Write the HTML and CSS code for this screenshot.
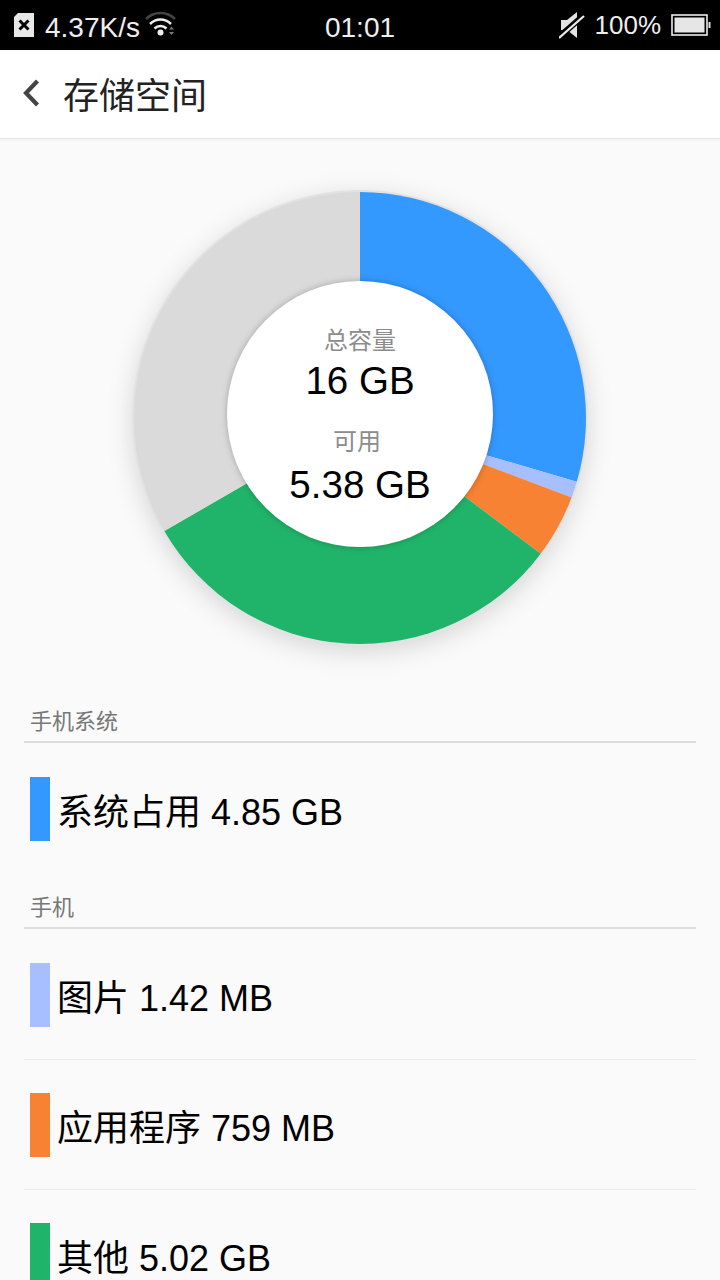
FILE: index.html
```
<!DOCTYPE html>
<html lang="zh">
<head>
<meta charset="utf-8">
<title>存储空间</title>
<link rel="stylesheet" href="styles.css">
</head>
<body>
<div class="page">
  <header class="status">
    <div class="status-left">
      <svg class="ic-sim" width="22" height="26" viewBox="0 0 22 26"><path d="M5 1H21V25H1V5Z" fill="#e8e8e8"/><path d="M6.500 8.500L15.500 17.500M15.500 8.500L6.500 17.500" stroke="#000" stroke-width="3" fill="none"/></svg>
      <span class="speed">4.37K/s</span>
      <svg class="ic-wifi" width="32" height="28" viewBox="0 0 32 28"><path d="M1 8C9 0 22 0 30 8" stroke="#444" stroke-width="2.500" fill="none"/><path d="M5 13C11 7 20 7 26 13" stroke="#eee" stroke-width="2.500" fill="none"/><path d="M9.500 17.500C13 14 18 14 21.500 17.500" stroke="#eee" stroke-width="2.500" fill="none"/><circle cx="15.500" cy="21.500" r="3" fill="#eee"/><path d="M24 18.500h5l-2.500-3zM24 21h5l-2.500 3z" fill="#777"/></svg>
    </div>
    <div class="clock">01:01</div>
    <div class="status-right">
      <svg class="ic-mute" width="26" height="28" viewBox="0 0 26 28"><path d="M2 9H8L18 1V27L8 19H2Z" fill="#e4e4e4"/><path d="M-1 27L24 5" stroke="#000" stroke-width="6"/><path d="M0 27L25 5" stroke="#eee" stroke-width="2.200"/></svg>
      <span class="batt-text">100%</span>
      <svg class="ic-batt" width="40" height="22" viewBox="0 0 40 22"><rect x="1" y="1" width="35" height="20" fill="none" stroke="#eee" stroke-width="1.600"/><rect x="3.500" y="3.500" width="30" height="15" fill="#e6e6e6"/><rect x="37.500" y="8" width="2" height="6" fill="#ddd"/></svg>
    </div>
  </header>
  <nav class="titlebar">
    <svg class="ic-back" width="18" height="30" viewBox="0 0 18 30"><path d="M15.500 3L4 15L15.500 27" stroke="#444" stroke-width="4.200" fill="none"/></svg>
    <h1 class="title">存储空间</h1>
  </nav>
  <main class="content">
    <section class="chart-wrap">
      <div class="chart">
        <svg class="donut" width="480" height="480" viewBox="-240 -240 480 480">
          <circle class="ring" r="228"/>
          <path fill="#3399ff" d="M0 0V-226A226 226 0 0 1 216.800 63.800Z"/>
          <path fill="#a8bfff" d="M0 0L216.800 63.800A226 226 0 0 1 211.600 79.500Z"/>
          <path fill="#f78233" d="M0 0L211.600 79.500A226 226 0 0 1 180.700 135.700Z"/>
          <path fill="#20b46a" d="M0 0L180.700 135.700A226 226 0 0 1 -195.700 113Z"/>
          <path fill="#dadada" d="M0 0L-195.700 113A226 226 0 0 1 0 -226Z"/>
          <circle class="hole" cy="-4" r="133"/>
        </svg>
        <div class="chart-text">
          <div class="cap">总容量</div>
          <div class="num">16 GB</div>
          <div class="cap cap-free">可用</div>
          <div class="num num-free">5.38 GB</div>
        </div>
      </div>
    </section>
    <section class="group">
      <div class="group-head">手机系统</div>
      <div class="row row-first"><i class="swatch sw-blue"></i><span class="label">系统占用 4.85 GB</span></div>
    </section>
    <section class="group group-phone">
      <div class="group-head">手机</div>
      <div class="row row-first row-line"><i class="swatch sw-light"></i><span class="label">图片 1.42 MB</span></div>
      <div class="row row-line"><i class="swatch sw-orange"></i><span class="label">应用程序 759 MB</span></div>
      <div class="row"><i class="swatch sw-green"></i><span class="label">其他 5.02 GB</span></div>
    </section>
  </main>
</div>
</body>
</html>
```
FILE: styles.css
```
* { box-sizing: border-box; }
html, body { margin: 0; height: 1280px; overflow: hidden; }
body { font-family: "Liberation Sans", "Noto Sans CJK SC", sans-serif; background: #fafafa; color: #000; }
.page { width: 720px; height: 1280px; overflow: hidden; display: flex; flex-direction: column; }

.status { height: 50px; flex: none; background: #000; color: #eee; display: grid; grid-template-columns: 1fr auto 1fr; align-items: center; font-size: 28px; }
.status-left { display: flex; align-items: center; padding-left: 13px; }
.speed { margin-left: 10px; padding-top: 5px; }
.ic-wifi { margin-left: 5px; }
.clock { text-align: center; padding-top: 5px; }
.status-right { display: flex; align-items: center; justify-content: flex-end; padding-right: 9px; }
.batt-text { margin-left: 10px; margin-right: 10px; font-size: 26px; }

.titlebar { height: 89px; flex: none; background: #fff; border-bottom: 1px solid #e8e8e8; box-shadow: 0 1px 3px rgba(0,0,0,.05); display: flex; align-items: center; padding-left: 22px; padding-bottom: 3px; }
.title { margin: 0 0 0 23px; font-size: 36px; font-weight: 400; color: #222; }

.content { flex: 1; padding: 0 24px; }
.chart-wrap { display: flex; justify-content: center; padding-top: 39px; height: 568px; margin: 0 -24px; }
.chart { display: grid; width: 480px; height: 480px; }
.donut, .chart-text { grid-area: 1 / 1; }
.donut { overflow: visible; }
.ring { fill: #e2e2e2; filter: drop-shadow(0 6px 12px rgba(0,0,0,.14)); }
.hole { fill: #fff; filter: drop-shadow(0 0 3px rgba(0,0,0,.25)); }
.chart-text { display: flex; flex-direction: column; align-items: center; padding-top: 148px; }
.cap { font-size: 24px; line-height: 29px; color: #8c8c8c; }
.cap-free { margin-top: 20px; margin-left: -6px; }
.num { font-size: 38.500px; line-height: 52px; }
.num-free { margin-top: 3px; }

.group-head { height: 36px; border-bottom: 2px solid #dcdcdc; font-size: 22px; line-height: 30px; color: #777; padding-left: 6px; }
.row { height: 130px; display: flex; align-items: center; padding-left: 6px; }
.row-first { margin-top: 1px; }
.row-line { border-bottom: 1px solid #ebebeb; }
.group-phone { margin-top: 19px; }
.swatch { width: 20px; height: 64px; flex: none; }
.sw-blue { background: #3399ff; }
.sw-light { background: #a8bfff; }
.sw-orange { background: #f78233; }
.sw-green { background: #20b46a; }
.label { margin-left: 7px; font-size: 36px; }
```
